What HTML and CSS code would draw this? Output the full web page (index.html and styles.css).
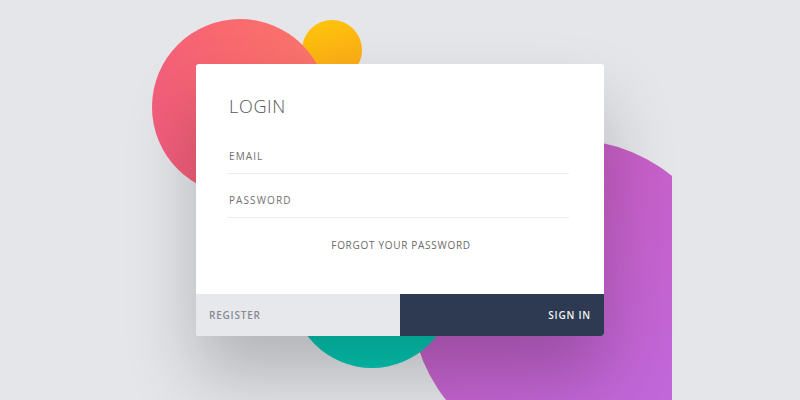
FILE: index.html
```html
<!DOCTYPE html>
<html lang="en">
<head>
    <meta charset="UTF-8">
    <meta name="viewport" content="width=device-width, initial-scale=1.0">
    <title>Login Card</title>
    <link rel="stylesheet" href="styles.css">
</head>
<body>
    <div class="scene">
        <!-- decorative circles behind the card -->
        <span class="blob blob-yellow"></span>
        <span class="blob blob-pink"></span>
        <span class="blob blob-purple"></span>
        <span class="blob blob-teal"></span>

        <form class="card">
            <div class="card-body">
                <h1 class="card-title">LOGIN</h1>
                <input class="field" type="email" placeholder="EMAIL">
                <input class="field" type="password" placeholder="PASSWORD">
                <a class="forgot" href="#">FORGOT YOUR PASSWORD</a>
            </div>
            <div class="card-actions">
                <button type="button" class="btn btn-register">REGISTER</button>
                <button type="submit" class="btn btn-signin">SIGN IN</button>
            </div>
        </form>
    </div>
</body>
</html>
```

FILE: styles.css
```css
body {
    margin: 0;
    padding: 0;
    background: #e5e6ea;
    font-family: "Open Sans", "Liberation Sans", sans-serif;
    overflow: hidden;
}

.scene {
    position: relative;
    width: 800px;
    height: 400px;
    display: flex;
    align-items: center;
    justify-content: center;
    overflow: hidden;
}

.blob {
    position: absolute;
    border-radius: 50%;
}

.blob-yellow {
    left: 302px;
    top: 20px;
    width: 60px;
    height: 60px;
    background: linear-gradient(160deg, #ffc60a, #fba51b);
}

.blob-pink {
    left: 152px;
    top: 19px;
    width: 176px;
    height: 176px;
    background: linear-gradient(70deg, #f05a80 0%, #f9696f 55%, #fb776a 100%);
}

.blob-purple {
    left: 411px;
    top: 140px;
    width: 320px;
    height: 320px;
    background: linear-gradient(150deg, #cc5bbf 0%, #c563cf 50%, #bf6ae2 100%);
    clip-path: inset(0 59px 0 0); /* flat right side */
}

.blob-teal {
    left: 291px;
    top: 206px;
    width: 162px;
    height: 162px;
    background: linear-gradient(180deg, #00bfae, #05c9b4);
}

.card {
    position: relative;
    z-index: 1;
    width: 408px;
    background: #fff;
    border-radius: 3px;
    overflow: hidden;
    box-shadow: 0 40px 70px rgba(0, 0, 0, 0.22);
    margin: 0;
}

.card-body {
    padding: 30px 35px 42px 31px;
    display: flex;
    flex-direction: column;
}

.card-title {
    margin: 0 0 12px 2px;
    font-size: 18px;
    line-height: 24px;
    font-weight: 300;
    letter-spacing: 0.7px;
    color: #555;
}

.field {
    display: block;
    box-sizing: border-box;
    width: 100%;
    height: 44px;
    margin: 0;
    padding: 8px 2px 0;
    border: 0;
    border-bottom: 1px solid #ececec;
    outline: none;
    background: transparent;
    font-family: inherit;
    font-size: 10px;
    letter-spacing: 1.1px;
    color: #555;
}

.field::placeholder {
    color: #707070;
    letter-spacing: 1.1px;
    opacity: 1;
}

.forgot {
    margin: 20px 0 0 6px;
    align-self: center;
    font-size: 10px;
    line-height: 14px;
    letter-spacing: 0.7px;
    color: #6a6a6a;
    text-decoration: none;
}

.card-actions {
    display: grid;
    grid-template-columns: 1fr 1fr;
    height: 42px;
}

.btn {
    border: 0;
    margin: 0;
    padding: 0 13px;
    font-family: inherit;
    font-size: 10px;
    font-weight: 600;
    letter-spacing: 0.8px;
    cursor: pointer;
}

.btn-register {
    background: #e6e8eb;
    color: #878b95;
    text-align: left;
}

.btn-signin {
    background: #2d3a52;
    color: #f3f4f6;
    text-align: right;
}
```
